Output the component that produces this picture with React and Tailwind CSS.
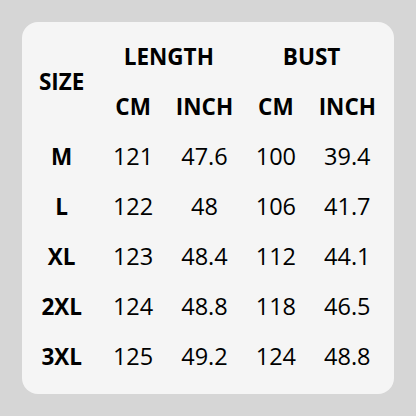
import React from "react";

const rows = [
  ["M", "121", "47.6", "100", "39.4"],
  ["L", "122", "48", "106", "41.7"],
  ["XL", "123", "48.4", "112", "44.1"],
  ["2XL", "124", "48.8", "118", "46.5"],
  ["3XL", "125", "49.2", "124", "48.8"],
];

const App = () => {
  return (
    <div className="w-[416px] h-[416px] bg-[#d6d6d6] p-[22px] font-['Open_Sans',sans-serif] text-black">
      <div className="w-[372px] h-[372px] bg-[#f5f5f5] rounded-[16px] pt-[10px] pl-[4px] pr-[11px]">
        <div className="grid grid-cols-5 auto-rows-[50px] text-[23.5px] items-center text-center">
          {/* header */}
          <div className="row-span-2 font-bold text-[22.5px]">SIZE</div>
          <div className="col-span-2 font-bold text-[22.5px]">LENGTH</div>
          <div className="col-span-2 font-bold text-[22.5px]">BUST</div>
          <div className="font-bold text-[22.5px]">CM</div>
          <div className="font-bold text-[22.5px]">INCH</div>
          <div className="font-bold text-[22.5px]">CM</div>
          <div className="font-bold text-[22.5px]">INCH</div>

          {rows.map((r) => (
            <React.Fragment key={r[0]}>
              <div className="font-bold text-[22.5px]">{r[0]}</div>
              <div>{r[1]}</div>
              <div>{r[2]}</div>
              <div>{r[3]}</div>
              <div>{r[4]}</div>
            </React.Fragment>
          ))}
        </div>
      </div>
    </div>
  );
};

export default App;
